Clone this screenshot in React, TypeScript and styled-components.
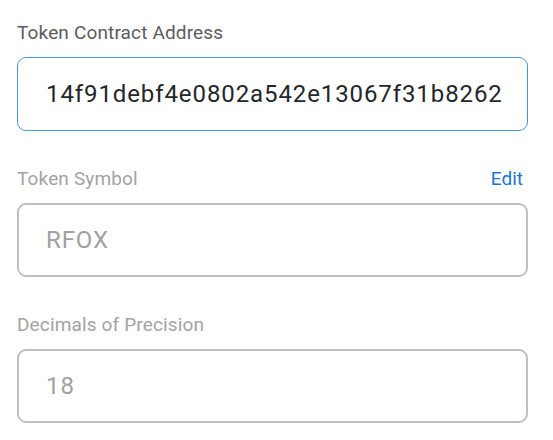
import React from "react";
import styled, { createGlobalStyle } from "styled-components";

const GlobalStyle = createGlobalStyle`
  body {
    margin: 0;
    background: #ffffff;
    font-family: Roboto, "Liberation Sans", sans-serif;
  }
`;

const Form = styled.div`
  display: flex;
  flex-direction: column;
  gap: 36px;
  width: 511px;
  padding: 21px 0 0 17px;
`;

const Field = styled.div`
  display: flex;
  flex-direction: column;
  gap: 12px;
`;

const LabelRow = styled.div`
  display: flex;
  justify-content: space-between;
  align-items: center;
  height: 24px;
`;

interface LabelProps {
  $muted?: boolean;
}

const Label = styled.label<LabelProps>`
  font-size: 19px;
  line-height: 24px;
  letter-spacing: 0.15px;
  color: ${(p) => (p.$muted ? "#a3a3a3" : "#5c5c5c")};
`;

const EditLink = styled.a`
  font-size: 19px;
  line-height: 24px;
  color: #1b76d2;
  cursor: pointer;
  margin-right: 5px;
`;

interface InputProps {
  $active?: boolean;
}

const Input = styled.input<InputProps>`
  box-sizing: border-box;
  width: 100%;
  height: 74px;
  padding: 0 0 0 ${(p) => (p.$active ? 28 : 27)}px;
  border-radius: 9px;
  border: ${(p) => (p.$active ? "1px solid #3f9be0" : "2px solid #bcc0c4")};
  background: #ffffff;
  font-family: Roboto, "Liberation Sans", sans-serif;
  font-size: 24px;
  letter-spacing: 0.9px;
  color: ${(p) => (p.$active ? "#24272a" : "#a1a1a1")};
  outline: none;
  -webkit-text-fill-color: ${(p) => (p.$active ? "#24272a" : "#a1a1a1")};
  opacity: 1;
`;

export default function App() {
  return (
    <>
      <GlobalStyle />
      <Form>
        <Field>
          <LabelRow>
            <Label>Token Contract Address</Label>
          </LabelRow>
          <Input $active readOnly value="14f91debf4e0802a542e13067f31b8262" />
        </Field>
        <Field>
          <LabelRow>
            <Label $muted>Token Symbol</Label>
            <EditLink>Edit</EditLink>
          </LabelRow>
          <Input disabled value="RFOX" />
        </Field>
        <Field>
          <LabelRow>
            <Label $muted>Decimals of Precision</Label>
          </LabelRow>
          <Input disabled value="18" />
        </Field>
      </Form>
    </>
  );
}
